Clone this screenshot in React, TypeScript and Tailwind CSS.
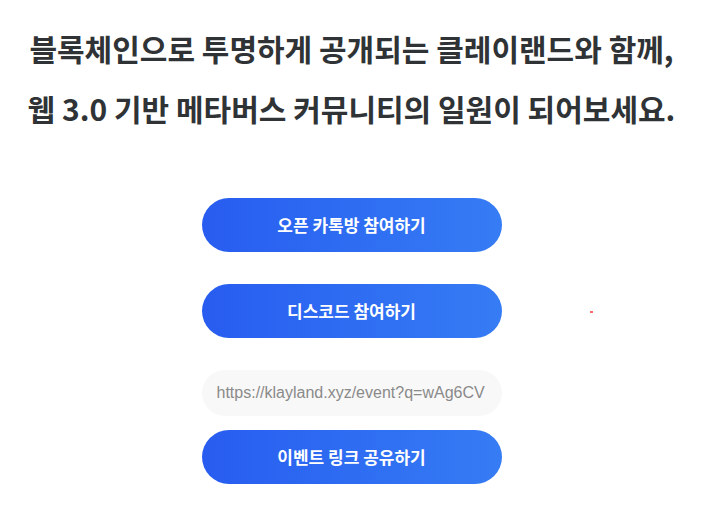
const buttons = {
  kakao: "오픈 카톡방 참여하기",
  discord: "디스코드 참여하기",
  share: "이벤트 링크 공유하기",
};

function GradientButton({ label }: { label: string }) {
  return (
    <button
      type="button"
      className="h-[54px] w-[300px] rounded-full bg-gradient-to-r from-[#285cf0] to-[#367cf4]
                 text-[17px] font-bold text-white"
    >
      {label}
    </button>
  );
}

export default function App() {
  return (
    <div
      className="relative min-h-[507px] w-full bg-white"
      style={{ fontFamily: "'Noto Sans CJK KR', 'Noto Sans', sans-serif" }}
    >
      <h1 className="pt-[18px] text-center text-[30px] font-bold leading-[60px] text-[#2f3336]">
        블록체인으로 투명하게 공개되는 클레이랜드와 함께,
        <br />
        웹 3.0 기반 메타버스 커뮤니티의 일원이 되어보세요.
      </h1>

      <div className="mt-[60px] flex flex-col items-center">
        <GradientButton label={buttons.kakao} />
        <div className="mt-8">
          <GradientButton label={buttons.discord} />
        </div>
        <div
          className="mt-8 flex h-[46px] w-[300px] items-center overflow-hidden rounded-full bg-[#f8f8f8] px-[15px]
                     text-[16px] text-[#8a8a8a] whitespace-nowrap"
          style={{ fontFamily: "'Liberation Sans', Arial, sans-serif" }}
        >
          https://klayland.xyz/event?q=wAg6CV
        </div>
        <div className="mt-[14px]">
          <GradientButton label={buttons.share} />
        </div>
      </div>

      {/* stray dot */}
      <span className="absolute left-[590px] top-[311px] h-[2px] w-[3px] bg-[#ff6b6b]" />
    </div>
  );
}
